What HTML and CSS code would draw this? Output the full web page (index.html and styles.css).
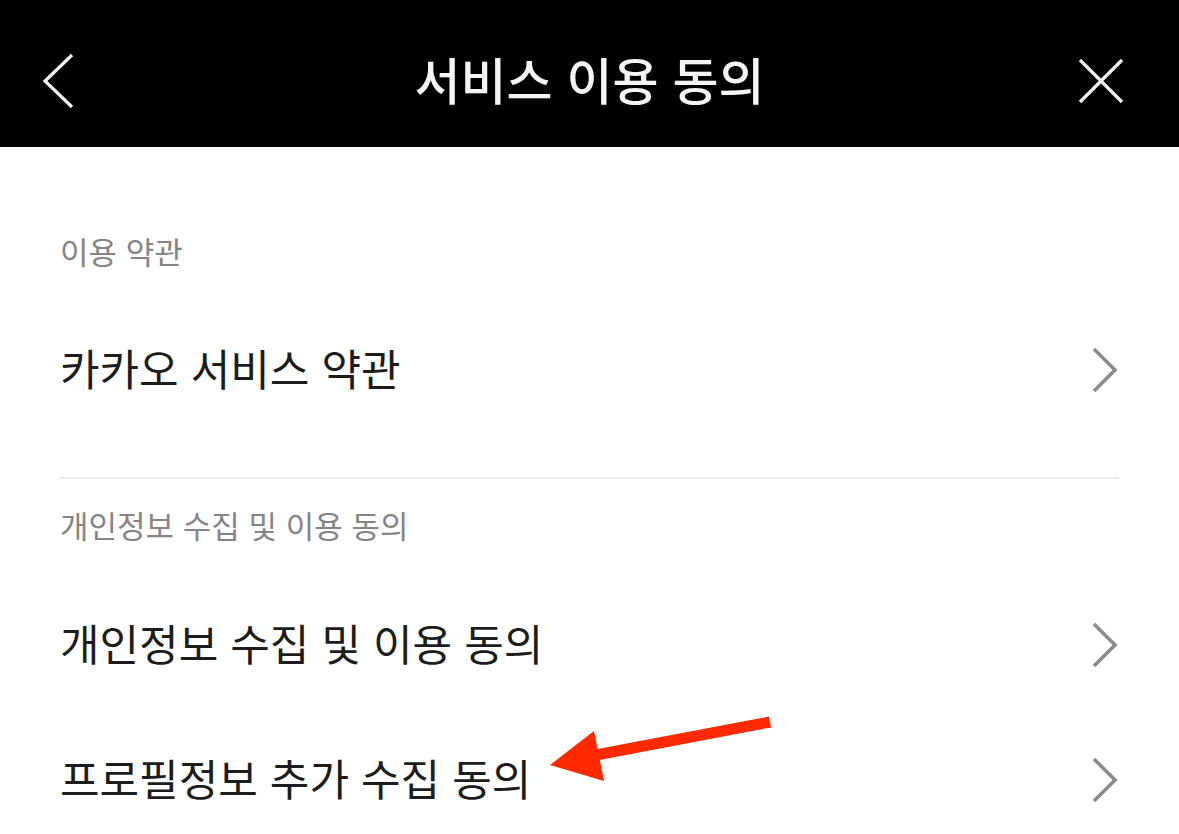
FILE: index.html
```html
<!DOCTYPE html>
<html lang="ko">
<head>
<meta charset="utf-8">
<title>서비스 이용 동의</title>
<link rel="stylesheet" href="styles.css">
</head>
<body>
<header class="topbar">
  <div class="bar-left">
    <svg class="icon-btn" width="60" height="60" viewBox="0 0 60 60"><polyline points="42,4 15,30 42,56" fill="none" stroke="#f4f4f4" stroke-width="3.2"/></svg>
  </div>
  <h1 class="bar-title">서비스 이용 동의</h1>
  <div class="bar-right">
    <svg class="icon-btn" width="60" height="60" viewBox="0 0 60 60"><path d="M9 9 L51 51 M51 9 L9 51" fill="none" stroke="#f4f4f4" stroke-width="3.2"/></svg>
  </div>
</header>
<main class="content">
  <section class="group">
    <div class="group-label">이용 약관</div>
    <div class="row">
      <span class="row-text">카카오 서비스 약관</span>
      <svg class="chev" width="30" height="50" viewBox="0 0 30 50"><polyline points="5,4 26,25 5,46" fill="none" stroke="#8c8c8c" stroke-width="3.6"/></svg>
    </div>
  </section>
  <section class="group group-second">
    <div class="group-label">개인정보 수집 및 이용 동의</div>
    <div class="row">
      <span class="row-text">개인정보 수집 및 이용 동의</span>
      <svg class="chev" width="30" height="50" viewBox="0 0 30 50"><polyline points="5,4 26,25 5,46" fill="none" stroke="#8c8c8c" stroke-width="3.6"/></svg>
    </div>
    <div class="row">
      <span class="row-text">프로필정보 추가 수집 동의</span>
      <svg class="chev" width="30" height="50" viewBox="0 0 30 50"><polyline points="5,4 26,25 5,46" fill="none" stroke="#8c8c8c" stroke-width="3.6"/></svg>
    </div>
  </section>
</main>
<svg class="annotation" width="1179" height="834" viewBox="0 0 1179 834">
  <line x1="596" y1="755" x2="770" y2="722" stroke="#ff2a00" stroke-width="11"/>
  <polygon points="550,765 594,731 604,781" fill="#ff2a00"/>
</svg>
</body>
</html>
```

FILE: styles.css
```css
html, body {
  margin: 0;
  padding: 0;
  background: #ffffff;
}

body {
  width: 1179px;
  height: 834px;
  overflow: hidden;
  position: relative;
  font-family: "Noto Sans CJK KR", "Noto Sans", sans-serif;
}

.topbar {
  box-sizing: border-box;
  height: 147px;
  padding-top: 15px;
  background: #000000;
  display: grid;
  grid-template-columns: 1fr auto 1fr;
  align-items: center;
}

.bar-left {
  padding-left: 30px;
  display: flex;
}

.bar-right {
  padding-right: 48px;
  display: flex;
  justify-content: flex-end;
}

.icon-btn {
  display: block;
}

.bar-title {
  margin: 0 0 6px 0;
  color: #f4f4f4;
  font-size: 50px;
  font-weight: 500;
  line-height: 60px;
  letter-spacing: 0;
}

.content {
  padding: 0 60px;
}

.group {
  padding-top: 52px;
  padding-bottom: 40px;
  border-bottom: 2px solid #ececec;
}

.group-second {
  border-bottom: none;
  padding-top: 0;
  padding-bottom: 0;
}

.group-label {
  box-sizing: border-box;
  height: 104px;
  display: flex;
  align-items: center;
  color: #858585;
  font-size: 31px;
  line-height: 40px;
}

.group-second .group-label {
  height: 98px;
  padding-bottom: 6px;
}

.row {
  height: 134px;
  display: flex;
  align-items: center;
  justify-content: space-between;
}

.group-second .row {
  height: 135px;
}

.row-text {
  color: #1c1c1c;
  font-size: 43px;
  line-height: 50px;
  margin-bottom: 6px;
}

.chev {
  display: block;
  flex: none;
}

.annotation {
  position: absolute;
  left: 0;
  top: 0;
  pointer-events: none;
}
```
